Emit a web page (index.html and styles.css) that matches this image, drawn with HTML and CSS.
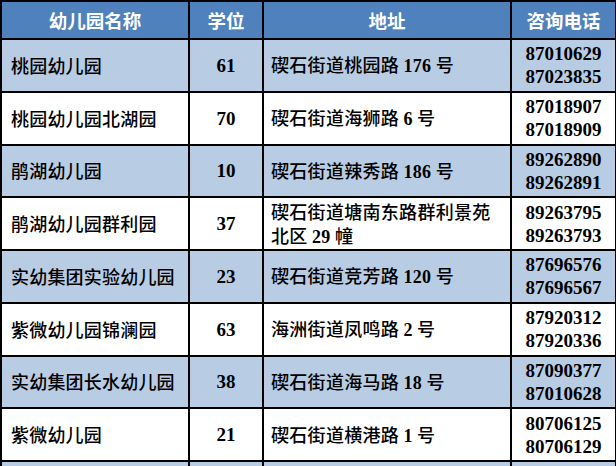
FILE: index.html
```html
<!DOCTYPE html>
<html lang="zh">
<head>
<meta charset="utf-8">
<link rel="stylesheet" href="styles.css">
</head>
<body>
<table class="kg">
  <colgroup>
    <col class="c-name"><col class="c-seat"><col class="c-addr"><col class="c-tel">
  </colgroup>
  <thead>
    <tr><th>幼儿园名称</th><th>学位</th><th>地址</th><th>咨询电话</th></tr>
  </thead>
  <tbody>
    <tr class="alt"><td class="name">桃园幼儿园</td><td class="seat">61</td><td class="addr">碶石街道桃园路 <span class="n">176</span> 号</td><td class="tel">87010629<br>87023835</td></tr>
    <tr><td class="name">桃园幼儿园北湖园</td><td class="seat">70</td><td class="addr">碶石街道海狮路 <span class="n">6</span> 号</td><td class="tel">87018907<br>87018909</td></tr>
    <tr class="alt"><td class="name">鹃湖幼儿园</td><td class="seat">10</td><td class="addr">碶石街道辣秀路 <span class="n">186</span> 号</td><td class="tel">89262890<br>89262891</td></tr>
    <tr><td class="name">鹃湖幼儿园群利园</td><td class="seat">37</td><td class="addr">碶石街道塘南东路群利景苑<br>北区 <span class="n">29</span> 幢</td><td class="tel">89263795<br>89263793</td></tr>
    <tr class="alt"><td class="name">实幼集团实验幼儿园</td><td class="seat">23</td><td class="addr">碶石街道竞芳路 <span class="n">120</span> 号</td><td class="tel">87696576<br>87696567</td></tr>
    <tr><td class="name">紫微幼儿园锦澜园</td><td class="seat">63</td><td class="addr">海洲街道凤鸣路 <span class="n">2</span> 号</td><td class="tel">87920312<br>87920336</td></tr>
    <tr class="alt"><td class="name">实幼集团长水幼儿园</td><td class="seat">38</td><td class="addr">碶石街道海马路 <span class="n">18</span> 号</td><td class="tel">87090377<br>87010628</td></tr>
    <tr><td class="name">紫微幼儿园</td><td class="seat">21</td><td class="addr">碶石街道横港路 <span class="n">1</span> 号</td><td class="tel">80706125<br>80706129</td></tr>
    <tr class="alt"><td class="name">&nbsp;</td><td class="seat">&nbsp;</td><td class="addr">&nbsp;</td><td class="tel">&nbsp;<br>&nbsp;</td></tr>
  </tbody>
</table>
</body>
</html>
```
FILE: styles.css
```css
html, body {
  margin: 0;
  padding: 0;
  background: #ffffff;
  overflow: hidden;
}
body {
  width: 616px;
  height: 466px;
}
.kg {
  border-collapse: collapse;
  table-layout: fixed;
  width: 615px;
  margin: 0;
  font-family: "Liberation Serif", "Noto Sans CJK SC", serif;
  color: #000;
}
.c-name { width: 188px; }
.c-seat { width: 74px; }
.c-addr { width: 248px; }
.c-tel  { width: 105px; }
.kg th, .kg td {
  border: 2px solid #000;
  padding: 0;
  overflow: hidden;
}
.kg th {
  height: 36px;
  background: #4f81bd;
  color: #fff;
  font-family: "Noto Sans CJK SC", sans-serif;
  font-weight: 700;
  font-size: 18.5px;
  line-height: 24px;
  text-align: center;
  vertical-align: middle;
}
.kg td {
  height: 50.75px;
  vertical-align: middle;
  font-size: 18px;
  line-height: 23px;
}
.kg tr.alt td { background: #b8cce4; }
.kg td.name {
  padding-left: 9px;
  font-family: "Noto Sans CJK SC", sans-serif;
  font-weight: 500;
  letter-spacing: 0.2px;
}
.kg td.seat {
  text-align: center;
  font-weight: 700;
  font-size: 19px;
}
.kg td.addr {
  padding-left: 7px;
  font-family: "Noto Sans CJK SC", sans-serif;
  font-weight: 500;
  letter-spacing: 0.3px;
  line-height: 24px;
}
.kg .n {
  font-family: "Liberation Serif", serif;
  font-weight: 700;
  font-size: 18px;
}
.kg td.tel {
  text-align: center;
  font-weight: 700;
  font-size: 19px;
  line-height: 23px;
}
```
